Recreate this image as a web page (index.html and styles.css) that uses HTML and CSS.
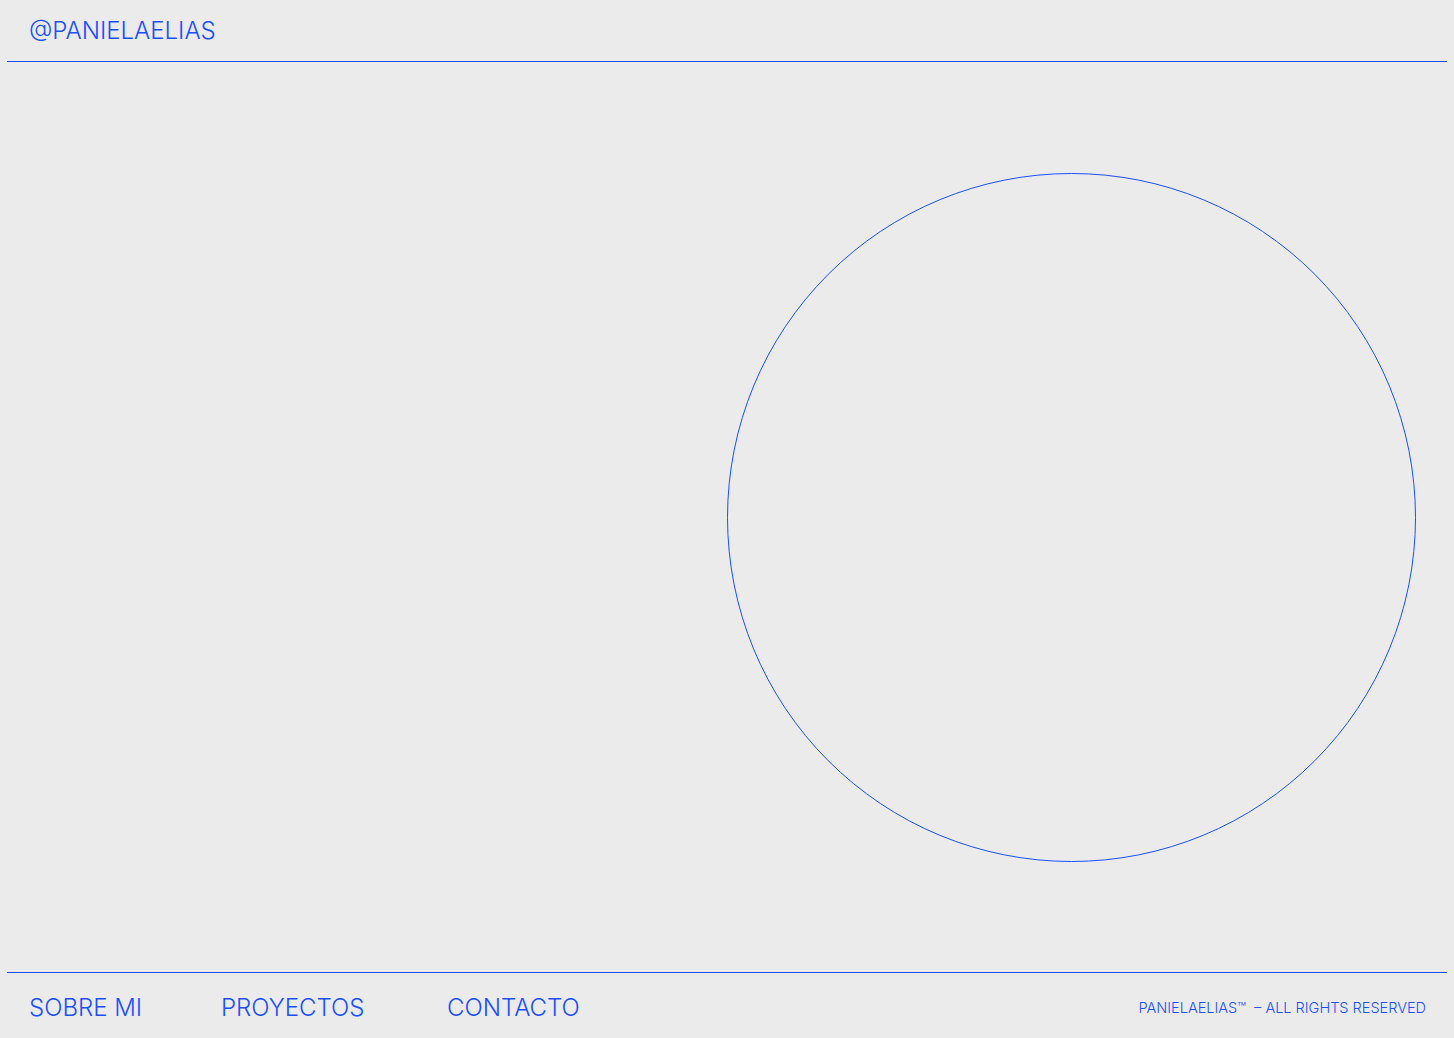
FILE: index.html
```html
<!DOCTYPE html>
<html lang="es">
<head>
<meta charset="utf-8">
<title>@PANIELAELIAS</title>
<link rel="stylesheet" href="styles.css">
</head>
<body>
<div class="page">
  <header class="top">
    <a class="handle" href="#">@PANIELAELIAS</a>
  </header>
  <main class="stage">
    <div class="circle"></div>
  </main>
  <footer class="bottom">
    <nav class="nav">
      <a href="#" class="nav-sobre">SOBRE MI</a>
      <a href="#" class="nav-proy">PROYECTOS</a>
      <a href="#" class="nav-cont">CONTACTO</a>
    </nav>
    <div class="rights">PANIELAELIAS™&nbsp;&nbsp;– ALL RIGHTS RESERVED</div>
  </footer>
</div>
</body>
</html>
```

FILE: styles.css
```css
* { box-sizing: border-box; }
html, body { margin: 0; padding: 0; }
body {
  background: #ebebeb;
  color: #1a4fff;
  font-family: Inter, "Liberation Sans", sans-serif;
  height: 1038px;
  overflow: hidden;
}
a { color: inherit; text-decoration: none; }
.page {
  display: flex;
  flex-direction: column;
  height: 1038px;
  padding: 0 7px;
}
.top {
  height: 62px;
  border-bottom: 1px solid #1a4fff;
  display: flex;
  align-items: flex-start;
  padding: 16px 0 0 22px;
}
.handle {
  font-size: 24px;
  font-weight: 300;
  line-height: 30px;
}
.stage {
  height: 910px;
  display: flex;
  justify-content: flex-end;
  padding: 111px 31px 0 0;
}
.circle {
  width: 689px;
  height: 689px;
  border: 1px solid #1a4fff;
  border-radius: 50%;
}
.bottom {
  border-top: 1px solid #1a4fff;
  display: flex;
  justify-content: space-between;
  align-items: center;
  height: 66px;
  padding: 4px 21px 0 22px;
}
.nav {
  display: flex;
  font-size: 24px;
  font-weight: 300;
}
.nav-sobre { width: 192px; }
.nav-proy { width: 226px; }
.rights {
  font-size: 14.5px;
  font-weight: 300;
}
```
